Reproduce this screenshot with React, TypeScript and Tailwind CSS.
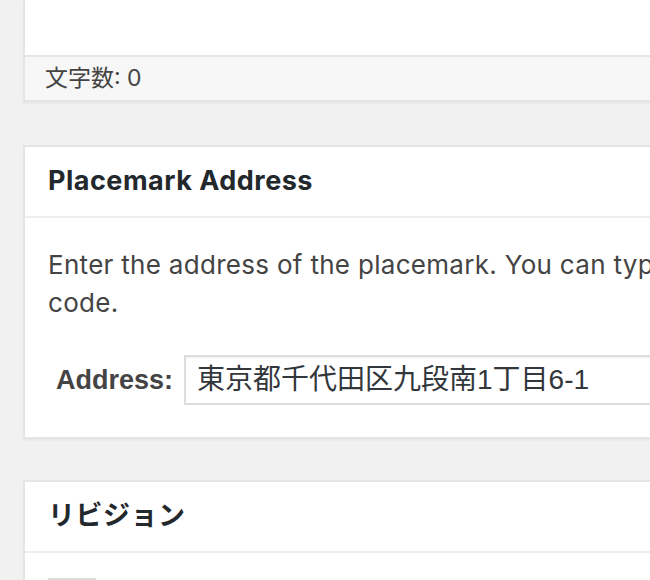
const sans = "font-['Inter','Noto_Sans_CJK_JP',sans-serif]";

function Card({ title, children }: { title: string; children: React.ReactNode }) {
  return (
    <div className="w-[900px] border-2 border-[#e5e5e5] bg-white shadow-[0_2px_2px_rgba(0,0,0,0.04)]">
      <div className="flex h-[71px] items-center border-b-2 border-[#eeeeee] px-[23px]">
        <h2 className={`${sans} text-[27px] font-bold tracking-[0.5px] text-[#23282d]`}>{title}</h2>
      </div>
      {children}
    </div>
  );
}

export default function App() {
  return (
    <div className="h-[580px] w-[650px] overflow-hidden bg-[#f1f1f1] pl-[23px]">
      {/* editor bottom + word count */}
      <div className="w-[900px] border-x-2 border-b-2 border-[#e5e5e5] shadow-[0_2px_2px_rgba(0,0,0,0.04)]">
        <div className="h-[57px] border-b-2 border-[#e5e5e5] bg-white" />
        <div className="flex h-[43px] items-center bg-[#f7f7f7] px-[20px]">
          <span className={`${sans} text-[23px] text-[#444]`}>文字数: 0</span>
        </div>
      </div>

      <div className="mt-[43px]">
        <Card title="Placemark Address">
          <div className="pl-[23px] pt-[28px] pb-[32px]">
            <p className={`${sans} w-[860px] text-[26px] leading-[38px] tracking-[0.3px] text-[#444]`}>
              Enter the address of the placemark. You can type in the postal
              code.
            </p>
            <div className="mt-[33px] flex items-center">
              <label className="w-[136px] pl-[8px] font-['Liberation_Sans',sans-serif] text-[27px] font-bold text-[#444]">
                Address:
              </label>
              <div className="flex h-[50px] w-[500px] items-center border-2 border-[#dddddd] bg-white px-[11px] shadow-[inset_0_1px_2px_rgba(0,0,0,0.07)]">
                <span className="font-['Liberation_Sans','Noto_Sans_CJK_JP',sans-serif] text-[28px] text-[#32373c]">
                  東京都千代田区九段南1丁目6-1
                </span>
              </div>
            </div>
          </div>
        </Card>
      </div>

      <div className="mt-[41px]">
        <Card title="リビジョン">
          <div className="pl-[23px] pt-[25px]">
            <div className="h-[20px] w-[48px] border-2 border-[#dcdcdc] bg-[#f4f4f4]" />
          </div>
        </Card>
      </div>
    </div>
  );
}
